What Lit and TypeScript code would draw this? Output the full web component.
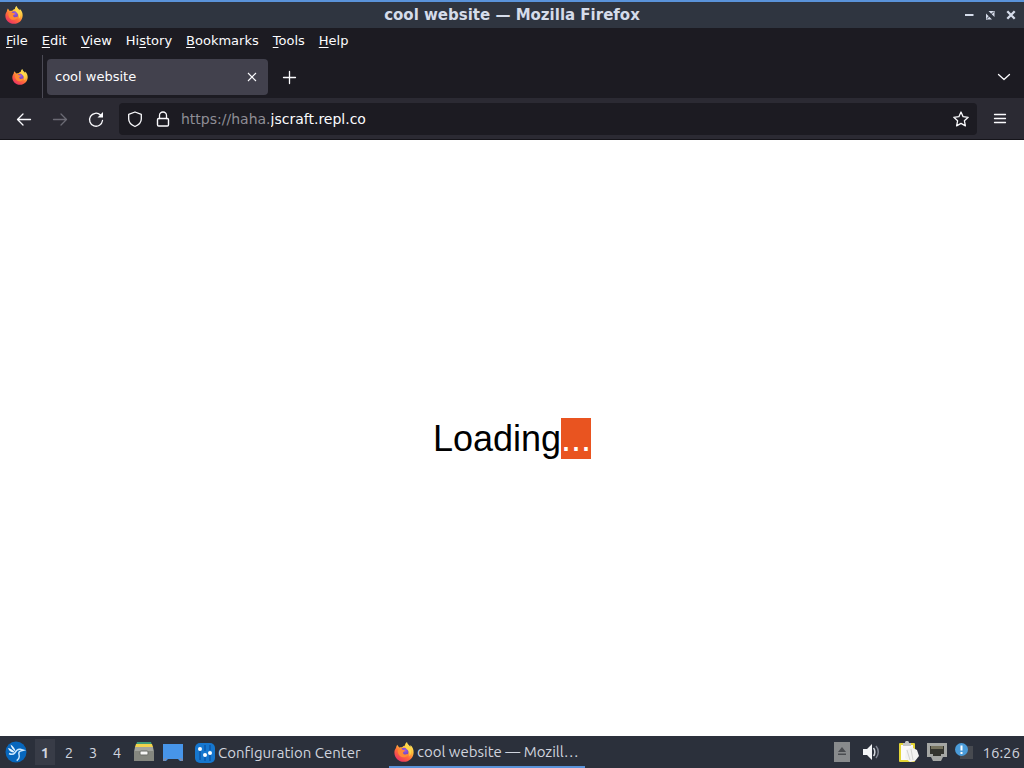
import { LitElement, html, css, svg, nothing } from "lit";
import { customElement, property } from "lit/decorators.js";

@customElement("fox-logo")
class FoxLogo extends LitElement {
  static styles = css`
    :host { display: block; width: 20px; height: 20px; flex: none; }
    .art { display: block; width: 100%; height: 100%; }
  `;
  render() {
    return html`<svg class="art" viewBox="0 0 20 20" aria-hidden="true">
      <defs>
        <linearGradient id="flame" x1="0.85" y1="0" x2="0.2" y2="1">
          <stop offset="0" stop-color="#fff36a" />
          <stop offset=".35" stop-color="#ffbd3a" />
          <stop offset=".62" stop-color="#ff6a3a" />
          <stop offset="1" stop-color="#e72a6a" />
        </linearGradient>
        <radialGradient id="globe" cx=".6" cy=".3" r=".8">
          <stop offset="0" stop-color="#a05be0" />
          <stop offset="1" stop-color="#5a3fc0" />
        </radialGradient>
      </defs>
      <path fill="url(#flame)" d="M3.200 2.800 5.200 5.600C6 5.200 7 5.100 8 5.300 8.900 4.200 10 3.600 11 3.400 11 2.200 11.800.9 13 .1c.3 2.200 2 3 3.300 4.600.2-.5.2-1 0-1.600C18.700 5 19.800 8 19.600 10.700 19.300 16 15.200 19.800 10 19.800 4.600 19.800.4 15.800.4 10.700.4 8.800 1 7.200 2 6 2 5 2.500 3.900 3.200 2.800z" />
      <circle cx="10.400" cy="9.800" r="4" fill="url(#globe)" />
      <path fill="#ff8a34" d="M4.200 7.400C6 6.300 8 6.900 9 7.900c.8.200 1.900.1 2.100.6-.2.900-1.700 1.300-2 1.700-.2 1 .4 2 1.600 2.200 1.400.2 2.200-.8 3.200-.2.500.5-.6 2.600-3.300 3.100-3.200.5-6.100-1.700-6.600-4.600C3.600 9.400 3.800 8.200 4.200 7.400z" />
      <path fill="#ffd848" d="M12.900 1.200c.5 2.600 3.300 3.700 4 6.800.5 2.300-.2 4.700-1.500 6.200.4-2.200.2-4-.9-5.300C13.300 7.300 11 6.300 11.400 4c.2-1.200.8-2.200 1.500-2.800z" />
    </svg>`;
  }
}

const line = (d: string) => svg`<path d=${d} fill="none" stroke="currentColor" stroke-width="1.3" stroke-linecap="round" stroke-linejoin="round" />`;

const GLYPHS: Record<string, unknown> = {
  back: line("M14.500 8.500H1.500M7 3 1.500 8.500 7 14"),
  forward: line("M1.500 8.500h13M9 3l5.500 5.500L9 14"),
  reload: svg`${line("M14.500 9.500A6.500 6.500 0 1 1 12.500 4")}<path d="M15 1v5.500H9.500z" fill="currentColor" />`,
  shield: line("M8 1 14.300 3.300V8C14.300 11.500 11.500 14 8 15.500 4.500 14 1.700 11.500 1.700 8V3.300z"),
  lock: svg`${line("M4.500 7.500V4.500a3.500 3.500 0 0 1 7 0v3")}<rect x="2.500" y="7.500" width="11" height="7.500" rx="1.200" fill="none" stroke="currentColor" stroke-width="1.400" />`,
  star: line("M8 1l2.100 4.700 5.100.6-3.800 3.500 1 5.100L8 12.400l-4.400 2.500 1-5.100L.8 6.300l5.100-.6z"),
  menu: line("M2.500 3.500h11M2.500 7.500h11M2.500 11.500h11"),
  plus: line("M7.500 2.500v12M1.500 8.500h12"),
  cross: svg`<path d="M4 4l8 8M12 4l-8 8" stroke="currentColor" stroke-width="1.100" />`,
  chevron: line("M2.500 5.500 8 10.500l5.500-5"),
  min: svg`<path d="M4 8h8.500" stroke="currentColor" stroke-width="2" />`,
  max: svg`<path d="M6.500 4H12.500v6zM4 6.500V12.500h6z" fill="currentColor" /><path d="M12.500 4 4 12.500" stroke="#2f3540" stroke-width="1" /><path d="M11 4h1.500v1.500zM4 11v1.500h1.500z" fill="currentColor" />`,
  close: svg`<path d="M4.300 4.300l7.400 7.400M11.700 4.300l-7.400 7.400" stroke="currentColor" stroke-width="2.300" />`,
};

@customElement("line-icon")
class LineIcon extends LitElement {
  static styles = css`
    :host { display: block; width: 16px; height: 16px; flex: none; }
    .art { display: block; overflow: visible; }
  `;
  @property() name = "";
  render() {
    return html`<svg class="art" width="16" height="16" viewBox="0 0 16 16" aria-hidden="true">${GLYPHS[this.name] ?? nothing}</svg>`;
  }
}

const birdIcon = html`<svg width="22" height="22" viewBox="0 0 22 22" aria-hidden="true">
  <circle cx="11" cy="11" r="10.500" fill="#0767bd" />
  <path d="M3 7c2.500.5 5 2 7 4.500C7.500 12 4 10.500 3 7zM5.500 3.500c2.500 1.500 4.500 4 5 7C8.500 9 6 7 5.500 3.500z" fill="#e6f5ff" />
  <path d="M4 12.500c2 1 4.500 1 6-.8 1.300-2.500 3-3.800 5.200-3.400l3.300.9-3.200.9c-1.500.6-1.800 2-1.200 3.900.6 2.400-.5 4.200-2.400 5.600" fill="none" stroke="#cfeaff" stroke-width="1.400" />
</svg>`;

const drawerIcon = html`<svg width="20" height="22" viewBox="0 0 20 22" aria-hidden="true">
  <path d="M3 1h14l1 3H2z" fill="#3f9c78" /><path d="M2 3h16l1 3H1z" fill="#f2d34c" />
  <path d="M1 6h18l1 5H0z" fill="#a2a49d" /><path d="M0 10h20v10H0z" fill="#85877f" />
  <rect x="6" y="10" width="8" height="4" rx="1" fill="#f7f7f5" stroke="#6d6f68" />
</svg>`;

const desktopIcon = html`<svg width="20" height="20" viewBox="0 0 20 20" aria-hidden="true">
  <path d="M0 2h20v17h-3l-2-2H5l-2 2H0z" fill="#4795e9" /><path d="M0 18l2-2h2l-2 3H0zM20 18l-2-2h-2l2 3h2z" fill="#7d8cad" />
</svg>`;

const configIcon = html`<svg width="20" height="20" viewBox="0 0 20 20" aria-hidden="true">
  <rect width="20" height="20" rx="5" fill="#1677cf" /><path d="M5 8v9M10 14v4M15 12v6M10 2v6M15 2v5" stroke="#0f5fb2" stroke-width="2" />
  <circle cx="5" cy="6" r="2" fill="#fff" /><circle cx="10" cy="12" r="2" fill="#fff" /><circle cx="15" cy="10" r="2" fill="#fff" />
</svg>`;

const ejectIcon = html`<svg width="16" height="20" viewBox="0 0 16 20" aria-hidden="true">
  <rect width="16" height="20" fill="#888a8c" /><path d="M4 10l4-5 4 5zM4 11.500h8V13H4z" fill="#4a4c50" />
</svg>`;

const volumeIcon = html`<svg width="16" height="16" viewBox="0 0 16 16" aria-hidden="true">
  <path d="M0 5h4l5-5v16l-5-5H0z" fill="#f4f5f7" />
  <path d="M10.500 4c1.800 2 1.800 6 0 8" fill="none" stroke="#d5d8de" stroke-width="1.500" /><path d="M13 2c3 3.500 3 8.500 0 12" fill="none" stroke="#7f8490" stroke-width="1.500" />
</svg>`;

const clipIcon = html`<svg width="20" height="22" viewBox="0 0 20 22" aria-hidden="true">
  <rect x="0" y="2" width="16" height="19" rx="1" fill="#e4d536" /><rect x="2" y="4" width="12" height="15" fill="#fafafa" />
  <path d="M4 2h2c0-3 4-3 4 0h2v3H4z" fill="#c5c7c4" />
  <path d="M7 9l5-3 6 3 2 6-4 5-5 1-5-4z" fill="#f3f3f1" /><path d="M8 9l3 10M12 8l2 11" stroke="#d3d3d0" />
</svg>`;

const networkIcon = html`<svg width="20" height="18" viewBox="0 0 20 18" aria-hidden="true">
  <path d="M0 0h20v14h-4l-2 4H6l-2-4H0z" fill="#a5a7a4" /><path d="M3 3h14v8h-3v2H6v-2H3z" fill="#34352f" />
  <path d="M5 3v3M7 3v3M9 3v3M11 3v3M13 3v3M15 3v3" stroke="#b8b28e" />
</svg>`;

const noticeIcon = html`<svg width="18" height="18" viewBox="0 0 18 18" aria-hidden="true">
  <rect x="5" y="3" width="13" height="13" fill="#474a50" /><circle cx="6.500" cy="6.500" r="6.500" fill="#4a9bd8" />
  <path d="M6.500 2.500v5M6.500 9v2" stroke="#fff" stroke-width="2" />
</svg>`;

const MENUS: [string, string, string][] = [
  ["", "F", "ile"], ["", "E", "dit"], ["", "V", "iew"], ["Hi", "s", "tory"],
  ["", "B", "ookmarks"], ["", "T", "ools"], ["", "H", "elp"],
];

@customElement("app-root")
class AppRoot extends LitElement {
  static styles = css`
    :host {
      display: flex; flex-direction: column; height: 100vh; overflow: hidden;
      background: #1c1b22; color: #fbfbfe;
      font: 13px/20px "DejaVu Sans", sans-serif;
    }
    * { box-sizing: border-box; }
    button, input {
      font: inherit; color: inherit; background: none; border: 0; padding: 0; margin: 0;
    }
    button { display: flex; align-items: center; justify-content: center; }
    svg { display: block; flex: none; }

    .titlebar {
      display: grid; grid-template-columns: 1fr auto 1fr; align-items: center;
      height: 28px; flex: none; padding: 0 5px;
      border-top: 2px solid #5a93da; background: #2f3540; color: #d5dcea;
    }
    .titlebar fox-logo { width: 18px; height: 18px; }
    .title { margin: 0; font-size: 15px; line-height: 20px; font-weight: bold; }
    .controls { display: flex; justify-content: flex-end; gap: 5px; }

    .menubar { display: flex; gap: 14px; height: 26px; margin-bottom: 1px; padding: 0 6px; align-items: center; flex: none; }
    .key { text-decoration: underline; text-underline-offset: 2px; }

    .tabs { display: flex; height: 43px; flex: none; align-items: center; }
    .pinned { width: 43px; height: 43px; padding-right: 2px; border-right: 1px solid #4b4a55; }
    .pinned fox-logo { width: 16px; height: 16px; }
    .tab {
      display: flex; align-items: center; justify-content: space-between;
      width: 221px; height: 36px; margin: 0 14px 0 4px; padding: 0 8px;
      border-radius: 4px; background: #42414d;
    }
    .spacer { flex: 1; }
    .tabs .list { margin-right: 12px; }

    .toolbar {
      display: flex; align-items: center; height: 42px; flex: none;
      padding: 0 16px; gap: 20px; background: #2b2a33; border-bottom: 1px solid #15141a;
    }
    .dim { color: #6b6a74; }
    .address {
      display: flex; align-items: center; flex: 1; gap: 12px; height: 32px;
      margin: 0 -5px; padding: 0 8px; border-radius: 4px; background: #1c1b22;
    }
    .url { display: flex; flex: 1; margin-left: -2px; font-size: 14px; }
    .scheme { color: #8f8e96; }
    .host { flex: 1; min-width: 0; outline: 0; }

    .page {
      flex: 1; display: flex; align-items: center; justify-content: center;
      padding-top: 2px; background: #fff; color: #000;
      font: 36px/42px "Liberation Sans", Arial, sans-serif;
    }
    .loading { margin: 0; }
    .selected { background: #e95420; color: #fff; }

    .taskbar {
      display: flex; align-items: center; height: 32px; flex: none;
      padding: 0 4px 0 5px; background: #2b303b; color: #d0d4de;
      font: 15px/20px Ubuntu, "Noto Sans", sans-serif;
    }
    .desks { display: flex; gap: 4px; margin: 0 7px 0 8px; }
    .desk { width: 20px; height: 26px; padding-top: 2px; }
    .current { background: #383c47; font-weight: bold; }
    .launchers { display: flex; gap: 9px; align-items: center; }
    .tasks { display: flex; flex: 1; margin-left: 10px; }
    .task {
      width: 196px; height: 32px; justify-content: flex-start; gap: 3px;
      padding: 2px 2px 0; white-space: nowrap;
    }
    .label { overflow: hidden; text-overflow: ellipsis; }
    .active { border-bottom: 2px solid #5a93da; padding-left: 5px; }
    .tray { display: flex; align-items: center; gap: 8px; }
    .sound { margin: 0 12px 0 5px; }
    .clock { margin-left: 1px; padding-top: 1px; }
  `;

  render() {
    return html`
      <header class="titlebar">
        <fox-logo></fox-logo>
        <h1 class="title">cool website — Mozilla Firefox</h1>
        <div class="controls">
          <button aria-label="Minimize"><line-icon name="min"></line-icon></button>
          <button aria-label="Maximize"><line-icon name="max"></line-icon></button>
          <button aria-label="Close window"><line-icon name="close"></line-icon></button>
        </div>
      </header>
      <nav class="menubar" aria-label="Menu bar">
        ${MENUS.map(([pre, key, post]) => html`<button><span>${pre}<span class="key">${key}</span>${post}</span></button>`)}
      </nav>
      <div class="tabs">
        <button class="pinned" aria-label="Firefox View"><fox-logo></fox-logo></button>
        <div class="tab">
          <span>cool website</span>
          <button aria-label="Close tab"><line-icon name="cross"></line-icon></button>
        </div>
        <button aria-label="New tab"><line-icon name="plus"></line-icon></button>
        <span class="spacer"></span>
        <button class="list" aria-label="List all tabs"><line-icon name="chevron"></line-icon></button>
      </div>
      <div class="toolbar">
        <button aria-label="Back"><line-icon name="back"></line-icon></button>
        <button class="dim" aria-label="Forward" disabled><line-icon name="forward"></line-icon></button>
        <button aria-label="Reload"><line-icon name="reload"></line-icon></button>
        <div class="address">
          <button aria-label="Tracking protection"><line-icon name="shield"></line-icon></button>
          <button aria-label="Connection secure"><line-icon name="lock"></line-icon></button>
          <label class="url">
            <span class="scheme">https://haha.</span>
            <input class="host" type="text" aria-label="Address" .value=${"jscraft.repl.co"} />
          </label>
          <button aria-label="Bookmark this page"><line-icon name="star"></line-icon></button>
        </div>
        <button aria-label="Application menu"><line-icon name="menu"></line-icon></button>
      </div>
      <main class="page"><p class="loading">Loading<span class="selected">...</span></p></main>
      <footer class="taskbar">
        <button aria-label="Start menu">${birdIcon}</button>
        <div class="desks">
          ${[1, 2, 3, 4].map((n) => html`<button class="desk ${n === 1 ? "current" : ""}">${n}</button>`)}
        </div>
        <div class="launchers">
          <button aria-label="File manager">${drawerIcon}</button>
          <button aria-label="Show desktop">${desktopIcon}</button>
        </div>
        <div class="tasks">
          <button class="task">${configIcon}<span class="label">Configuration Center</span></button>
          <button class="task active"><fox-logo></fox-logo><span class="label">cool website — Mozill…</span></button>
        </div>
        <div class="tray">
          <button aria-label="Removable media">${ejectIcon}</button>
          <button class="sound" aria-label="Volume">${volumeIcon}</button>
          <button aria-label="Clipboard">${clipIcon}</button>
          <button aria-label="Network">${networkIcon}</button>
          <button aria-label="Notifications">${noticeIcon}</button>
          <time class="clock">16:26</time>
        </div>
      </footer>
    `;
  }
}
